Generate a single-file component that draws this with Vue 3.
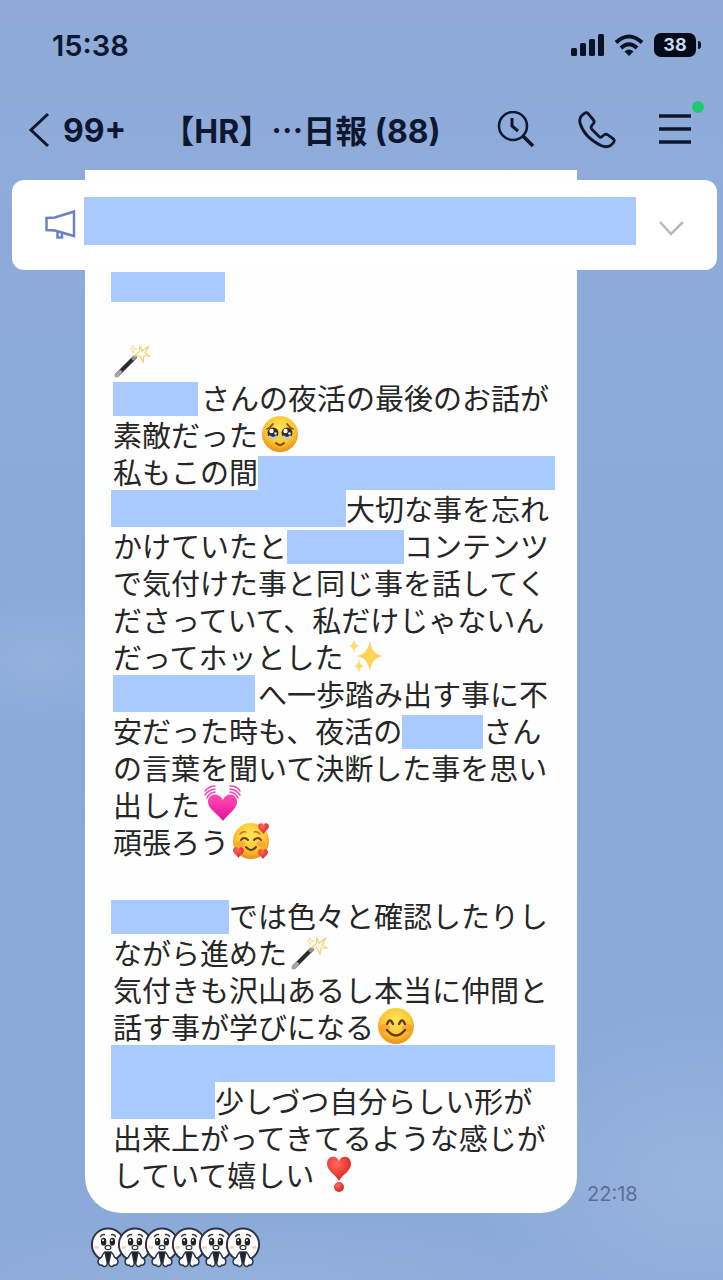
<template>
  <div class="chat-page">
    <svg class="defs" aria-hidden="true">
      <defs>
        <radialGradient id="face" cx="50%" cy="35%" r="65%">
          <stop offset="0" stop-color="#ffe65c" />
          <stop offset="0.6" stop-color="#fcc833" />
          <stop offset="1" stop-color="#e8901a" />
        </radialGradient>
        <linearGradient id="pink" x1="0" y1="0" x2="0" y2="1">
          <stop offset="0" stop-color="#ff4fb4" />
          <stop offset="1" stop-color="#e2109a" />
        </linearGradient>
        <radialGradient id="red" cx="40%" cy="30%" r="70%">
          <stop offset="0" stop-color="#ff6a5c" />
          <stop offset="1" stop-color="#d92323" />
        </radialGradient>
      </defs>

      <symbol id="wand" viewBox="0 0 38 38">
        <path d="M4 34 L22 16" stroke="#2c2c2e" stroke-width="4" stroke-linecap="round" />
        <path d="M3.500 34.500 L7 31" stroke="#a5a5aa" stroke-width="4" stroke-linecap="round" />
        <path d="M20.500 17.500 L22 16" stroke="#8e8e93" stroke-width="4" stroke-linecap="round" />
        <path d="M27 5 L29 10 L36 5 L32 12 L37 15 L31 15 L30 21 L27 15 L21 15 L26 11 Z" fill="#fffbe8" stroke="#ecd27c" stroke-width="1.200" />
        <path d="M20 4 L21 7 L24 8 L21 9 L20 12 L19 9 L17 8 L19 7 Z" fill="#fff6d0" stroke="#ecdca4" stroke-width="0.800" />
      </symbol>

      <symbol id="moved" viewBox="0 0 38 38">
        <circle cx="19" cy="19" r="18" fill="url(#face)" />
        <path d="M6 14 Q9 13 12 9 M26 9 Q29 13 32 14" fill="none" stroke="#8a4a12" stroke-width="1.800" stroke-linecap="round" />
        <circle cx="12" cy="18" r="5.500" fill="#3b2a22" />
        <circle cx="26" cy="18" r="5.500" fill="#3b2a22" />
        <circle cx="10.500" cy="16" r="2.200" fill="#fff" />
        <circle cx="24.500" cy="16" r="2.200" fill="#fff" />
        <circle cx="14.500" cy="18.500" r="1.200" fill="#fff" />
        <circle cx="28.500" cy="18.500" r="1.200" fill="#fff" />
        <path d="M8 21 Q12 25 16 21 M22 21 Q26 25 30 21" fill="none" stroke="#a8dcf0" stroke-width="2" />
        <path d="M15 28 Q19 32 23 28" fill="none" stroke="#8a4a12" stroke-width="2" stroke-linecap="round" />
      </symbol>

      <symbol id="sparkles" viewBox="0 0 38 38">
        <path d="M23 3 Q24 17 36 19 Q24 21 23 35 Q21 21 10 19 Q21 17 23 3 Z" fill="#fbd453" />
        <path d="M7 2 Q8 8 12 9 Q8 10 7 16 Q6 10 2 9 Q6 8 7 2 Z" fill="#fbdc78" />
        <path d="M12 22 Q13 28 17 29 Q13 30 12 36 Q11 30 7 29 Q11 28 12 22 Z" fill="#fbdc78" />
      </symbol>

      <symbol id="beating" viewBox="0 0 38 38">
        <path d="M20 36 C15 29 5 24 5 17 C5 8 16 7 20 15 C23 7 34 8 34 17 C34 24 25 29 20 36 Z" fill="url(#pink)" />
        <path d="M4 13 Q6 8 12 7 M2 10 Q5 5 12 4 M2 6 Q6 1 12 1 M27 7 Q33 8 35 13 M27 4 Q34 5 37 10 M27 1 Q34 1 37 6" fill="none" stroke="#ee4db4" stroke-width="1.600" stroke-linecap="round" />
      </symbol>

      <symbol id="heart-small" viewBox="0 0 12 12">
        <path d="M6 11 C4 8 1 7 1 4 C1 1 5 0 6 3 C7 0 11 1 11 4 C11 7 8 8 6 11 Z" fill="url(#red)" />
      </symbol>

      <symbol id="loved" viewBox="0 0 38 38">
        <circle cx="19" cy="19" r="18" fill="url(#face)" />
        <ellipse cx="9" cy="22" rx="4" ry="3" fill="#f58a3c" opacity="0.500" />
        <ellipse cx="29" cy="22" rx="4" ry="3" fill="#f58a3c" opacity="0.500" />
        <path d="M9 18 Q12 14 16 18 M22 18 Q26 14 29 18" fill="none" stroke="#6b3a14" stroke-width="2" stroke-linecap="round" />
        <path d="M8 12 Q11 9 14 10 M22 10 Q25 9 28 12" fill="none" stroke="#b87314" stroke-width="1.300" stroke-linecap="round" />
        <path d="M14 25 Q19 31 24 25" fill="none" stroke="#6b3a14" stroke-width="2" stroke-linecap="round" />
        <use href="#heart-small" x="25" y="0" width="13" height="13" />
        <use href="#heart-small" x="0" y="24" width="13" height="13" />
        <use href="#heart-small" x="25" y="26" width="12" height="12" />
      </symbol>

      <symbol id="smile" viewBox="0 0 38 38">
        <circle cx="19" cy="19" r="18" fill="url(#face)" />
        <ellipse cx="8" cy="21" rx="5" ry="4" fill="#f77d2e" opacity="0.450" />
        <ellipse cx="30" cy="21" rx="5" ry="4" fill="#f77d2e" opacity="0.450" />
        <path d="M10 17 Q13 10 16 17 M22 17 Q25 10 28 17" fill="none" stroke="#6b3a14" stroke-width="2.400" stroke-linecap="round" />
        <path d="M10 23 Q19 34 28 23" fill="none" stroke="#6b3a14" stroke-width="2.400" stroke-linecap="round" />
      </symbol>

      <symbol id="heart-mark" viewBox="0 0 38 38">
        <path d="M22 26 C19 20 10 16 10 9 C10 0 20 0 22 6 C24 0 34 0 34 9 C34 16 25 20 22 26 Z" fill="url(#red)" />
        <circle cx="22" cy="32" r="5" fill="url(#red)" />
      </symbol>

      <symbol id="sticker" viewBox="0 0 36 42">
        <circle cx="18" cy="18" r="16.500" fill="#fdfdfd" stroke="#2b3347" stroke-width="2" />
        <path d="M10 10 Q12 7 15 8 M21 8 Q24 7 26 10" fill="none" stroke="#333" stroke-width="1.500" />
        <ellipse cx="13.500" cy="15" rx="2.800" ry="4" fill="#222" />
        <ellipse cx="22.500" cy="15" rx="2.800" ry="4" fill="#222" />
        <circle cx="13" cy="13.500" r="1" fill="#fff" />
        <circle cx="22" cy="13.500" r="1" fill="#fff" />
        <ellipse cx="18" cy="21" rx="3" ry="2.200" fill="#fff" stroke="#333" stroke-width="1.200" />
        <ellipse cx="6.500" cy="21" rx="2.500" ry="1.500" fill="#f8cfc8" />
        <ellipse cx="29.500" cy="21" rx="2.500" ry="1.500" fill="#f8cfc8" />
        <path d="M14 25 H22 V38 H14 Z" fill="#1f222a" />
        <path d="M15 26 C12 26 13 31 10 32 C6 34 8 40 12 39 C14 42 18 40 17 36 Z M21 26 C24 26 23 31 26 32 C30 34 28 40 24 39 C22 42 18 40 19 36 Z" fill="#fff" stroke="#2b3347" stroke-width="1.500" />
      </symbol>
    </svg>

    <div class="status-bar">
      <span class="clock">15:38</span>
      <div class="status-icons">
        <svg width="34" height="22" viewBox="0 0 34 22" fill="#0a1226">
          <rect x="1" y="14" width="6" height="8" rx="1.500" />
          <rect x="10" y="9" width="6" height="13" rx="1.500" />
          <rect x="19" y="5" width="6" height="17" rx="1.500" />
          <rect x="28" y="0" width="6" height="22" rx="1.500" />
        </svg>
        <svg width="30" height="22" viewBox="0 0 30 22" fill="none" stroke="#0a1226" stroke-width="4">
          <path d="M2 8.500 Q15 -3.500 28 8.500" />
          <path d="M7 14 Q15 6.500 23 14" />
          <path d="M15 22 L10.500 17.500 Q15 13.500 19.500 17.500 Z" fill="#0a1226" stroke="none" />
        </svg>
        <div class="battery"><span class="battery-level">38</span></div>
      </div>
    </div>

    <header class="chat-header">
      <button class="back" aria-label="戻る">
        <svg width="22" height="36" viewBox="0 0 22 36" fill="none" stroke="#0d1830" stroke-width="3">
          <path d="M20 2 L3 18 L20 34" />
        </svg>
        <span>99+</span>
      </button>
      <h1 class="title">【HR】<span class="dots">…</span>日報 (88)</h1>
      <nav class="actions">
        <button aria-label="検索">
          <svg width="38" height="38" viewBox="0 0 38 38" fill="none" stroke="#0d1830" stroke-width="2.500">
            <circle cx="16" cy="15" r="14" />
            <path d="M26 25 L36 35" stroke-width="3.500" />
            <path d="M15 7 L15 15 L21 20" stroke-width="3" />
          </svg>
        </button>
        <button aria-label="通話">
          <svg width="38" height="38" viewBox="0 0 38 38" fill="none" stroke="#0d1830" stroke-width="2.800" stroke-linejoin="round">
            <path d="M10 2.500 L15.500 9 Q17 11 15 13 L13.500 15 Q12.500 16.500 14 18.500 L21 25.500 Q22.500 27 24 25.500 L26 24 Q28 22.500 30 24 L35.500 28 Q37 29.500 35.500 31.500 Q31 38 23 34.500 Q6 26 2 12 Q0.500 6 7 2 Q8.500 1 10 2.500 Z" />
          </svg>
        </button>
        <button class="menu" aria-label="メニュー">
          <svg width="32" height="38" viewBox="0 0 32 38" stroke="#0d1830" stroke-width="3.500">
            <path d="M0 5 H32 M0 18 H32 M0 31 H32" />
          </svg>
          <span class="badge"></span>
        </button>
      </nav>
    </header>

    <main class="talk">
      <section class="notice">
        <svg width="32" height="48" viewBox="0 0 32 48" fill="none" stroke="#6c80c8" stroke-width="2.500">
          <path d="M1.500 21 L10 20.500 L29 14.500 V39 L10 33.500 L1.500 33 Z" />
          <path d="M12.500 34 V40.500 H17 V35" />
        </svg>
        <div class="notice-text"></div>
        <button class="expand" aria-label="開く">
          <svg width="26" height="48" viewBox="0 0 26 48" fill="none" stroke="#b9b9bb" stroke-width="2.500">
            <path d="M1 25 L12 37 L24 25" />
          </svg>
        </button>
      </section>

      <div class="message">
        <div class="bubble">
          <p v-for="(line, i) in lines" :key="i" class="line">
            <template v-for="(part, j) in line" :key="j">
              <span v-if="part.mask" class="mask" :class="part.kind" :style="{ width: part.mask + 'px' }"></span>
              <svg v-else-if="part.emoji" class="emoji"><use :href="'#' + part.emoji" /></svg>
              <span v-else>{{ part.text }}</span>
            </template>
          </p>
        </div>
        <time class="time">22:18</time>
      </div>

      <div class="stickers">
        <svg v-for="n in 6" :key="n" class="sticker"><use href="#sticker" /></svg>
      </div>
    </main>
  </div>
</template>

<script setup>
const text = (value) => ({ text: value })
const emoji = (name) => ({ emoji: name })
const mask = (width, kind = '') => ({ mask: width, kind })

const lines = [
  [mask(114, 'name edge')],
  [],
  [emoji('wand')],
  [mask(85, 'spaced'), text('さんの夜活の最後のお話が')],
  [text('素敵だった'), emoji('moved')],
  [text('私もこの間'), mask(297)],
  [mask(235, 'tall edge'), text('大切な事を忘れ')],
  [text('かけていたと'), mask(117), text('コンテンツ')],
  [text('で気付けた事と同じ事を話してく')],
  [text('ださっていて、私だけじゃないん')],
  [text('だってホッとした'), emoji('sparkles')],
  [mask(142, 'tall spaced'), text('へ一歩踏み出す事に不')],
  [text('安だった時も、夜活の'), mask(81), text('さん')],
  [text('の言葉を聞いて決断した事を思い')],
  [text('出した'), emoji('beating')],
  [text('頑張ろう'), emoji('loved')],
  [],
  [mask(118, 'edge'), text('では色々と確認したりし')],
  [text('ながら進めた'), emoji('wand')],
  [text('気付きも沢山あるし本当に仲間と')],
  [text('話す事が学びになる'), emoji('smile')],
  [mask(444, 'tall edge')],
  [mask(104, 'tall edge'), text('少しづつ自分らしい形が')],
  [text('出来上がってきてるような感じが')],
  [text('していて嬉しい'), emoji('heart-mark')],
]
</script>

<style>
body {
  background: #8caad9;
}
</style>

<style scoped>
.chat-page {
  min-height: 100vh;
  color: #0d1830;
  font-family: Inter, "Noto Sans CJK JP", sans-serif;
  background:
    radial-gradient(ellipse 110px 70px at 40px 660px, rgba(158, 186, 222, 0.5), transparent),
    radial-gradient(ellipse 220px 170px at 700px 1180px, rgba(160, 188, 224, 0.6), transparent),
    radial-gradient(ellipse 340px 60px at 260px 1280px, rgba(156, 182, 222, 0.5), transparent),
    linear-gradient(#8faad6, #8eabda 170px, #8aa9d9 600px, #8caad9);
}

.defs {
  position: absolute;
  width: 0;
  height: 0;
}

button {
  display: flex;
  align-items: center;
  padding: 0;
  border: none;
  background: none;
  color: inherit;
  font: inherit;
  cursor: pointer;
}

svg {
  display: block;
  flex: none;
}

.status-bar {
  display: flex;
  align-items: center;
  justify-content: space-between;
  height: 90px;
  padding: 0 22px 0 52px;
}

.clock {
  font-size: 29px;
  font-weight: 600;
}

.status-icons {
  display: flex;
  align-items: center;
  gap: 10px;
}

.battery {
  display: flex;
  align-items: center;
  gap: 2px;
}

.battery::after {
  content: "";
  width: 3px;
  height: 8px;
  border-radius: 0 3px 3px 0;
  background: #0a1226;
}

.battery-level {
  width: 42px;
  border-radius: 7px;
  background: #050a18;
  color: #c9d8f2;
  font-size: 18px;
  font-weight: 700;
  line-height: 24px;
  text-align: center;
}

.chat-header {
  display: flex;
  align-items: center;
  height: 80px;
  padding: 0 32px 0 28px;
}

.back {
  gap: 13px;
  font-size: 32px;
  font-weight: 700;
}

.title {
  margin: 0 0 0 36px;
  font-size: 32px;
  font-weight: 700;
  line-height: 40px;
  white-space: nowrap;
}

.dots {
  font-family: "Noto Sans CJK JP", sans-serif;
}

.actions {
  display: flex;
  gap: 43px;
  margin-left: auto;
}

.menu {
  position: relative;
}

.badge {
  position: absolute;
  top: -10px;
  right: -13px;
  width: 12px;
  height: 12px;
  border-radius: 50%;
  background: #22c86e;
}

.talk {
  position: relative;
}

/* pinned notice lies over the top of the message */
.notice {
  position: absolute;
  top: 10px;
  left: 12px;
  right: 6px;
  display: flex;
  align-items: center;
  padding: 17px 32px 25px 33px;
  border-radius: 12px;
  background: #fff;
}

.notice-text {
  flex: 1;
  height: 48px;
  margin: 0 23px 0 7px;
  background: #a9caff;
}

.message {
  display: flex;
  align-items: flex-end;
  gap: 10px;
  padding-left: 85px;
}

.bubble {
  padding: 98px 22px 20px 28px;
  border-radius: 0 0 36px 36px;
  background: #fefefe;
}

.line {
  display: flex;
  align-items: flex-end;
  height: 37px;
  margin: 0;
  color: #262626;
  font-family: "Noto Sans CJK JP", sans-serif;
  font-size: 29px;
  line-height: 37px;
  white-space: nowrap;
}

.mask {
  flex: none;
  height: 34px;
  background: #a9caff;
}

.mask.tall {
  height: 37px;
}

.mask.name {
  height: 30px;
  align-self: center;
}

.mask.edge {
  margin-left: -2px;
}

.mask.spaced {
  margin-right: 3px;
}

.emoji {
  width: 38px;
  height: 38px;
  margin-left: 3px;
}

.emoji:first-child {
  margin-left: 0;
}

.time {
  padding-bottom: 7px;
  color: #5b6f96;
  font-size: 20px;
  line-height: 24px;
}

.stickers {
  display: flex;
  padding: 14px 0 12px 90px;
}

.sticker {
  width: 36px;
  height: 41px;
}

.sticker + .sticker {
  margin-left: -9px;
}
</style>
